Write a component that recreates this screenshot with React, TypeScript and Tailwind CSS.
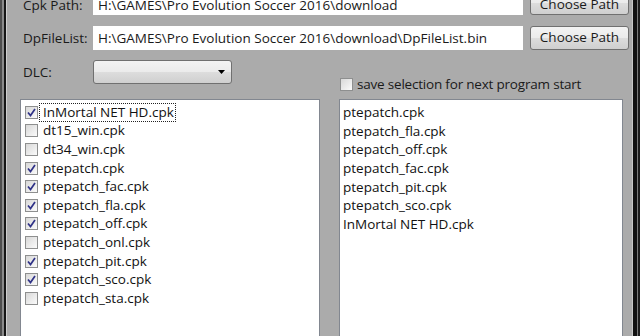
import React from "react";

const leftItems = [
  { name: "InMortal NET HD.cpk", checked: true, focus: true },
  { name: "dt15_win.cpk", checked: false },
  { name: "dt34_win.cpk", checked: false },
  { name: "ptepatch.cpk", checked: true },
  { name: "ptepatch_fac.cpk", checked: true },
  { name: "ptepatch_fla.cpk", checked: true },
  { name: "ptepatch_off.cpk", checked: true },
  { name: "ptepatch_onl.cpk", checked: false },
  { name: "ptepatch_pit.cpk", checked: true },
  { name: "ptepatch_sco.cpk", checked: true },
  { name: "ptepatch_sta.cpk", checked: false },
];

const rightItems = [
  "ptepatch.cpk",
  "ptepatch_fla.cpk",
  "ptepatch_off.cpk",
  "ptepatch_fac.cpk",
  "ptepatch_pit.cpk",
  "ptepatch_sco.cpk",
  "InMortal NET HD.cpk",
];

const font = "font-['Segoe_UI','Open_Sans',sans-serif]";

const CheckBox = ({ checked }: { checked: boolean }) => (
  <div className="w-[13px] h-[13px] shrink-0 border border-[#8e8f8f] bg-gradient-to-br from-[#d8d8d8] to-[#fbfbfb] flex items-center justify-center">
    {checked && (
      <svg width="9" height="9" viewBox="0 0 9 9">
        <path d="M1 4.5 L3.5 7.5 L8 1" fill="none" stroke="#2f3287" strokeWidth="1.7" />
      </svg>
    )}
  </div>
);

const Button = ({ label, low }: { label: string; low?: boolean }) => (
  <button
    className={`w-[99px] h-[24px] shrink-0 rounded-[3px] border border-[#707070] bg-[linear-gradient(#f3f3f3_0%,#ebebeb_50%,#dddddd_50%,#cfcfcf_100%)] text-[13.5px] text-[#1a1a1a] leading-none ${
      low ? "pt-[4px]" : ""
    }`}
  >
    {label}
  </button>
);

const TextBox = ({ value, low }: { value: string; low?: boolean }) => (
  <div
    className={`w-[430px] h-[24px] bg-white flex items-center pl-[5px] text-[13.5px] text-[#1a1a1a] whitespace-nowrap overflow-hidden ${
      low ? "pt-[4px]" : ""
    }`}
  >
    {value}
  </div>
);

export default function App() {
  return (
    <div className={`w-[640px] h-[336px] overflow-hidden bg-[#ababab] flex ${font}`}>
      {/* left window frame */}
      <div className="flex shrink-0 h-full">
        <div className="w-[2px] bg-[#4d4d4d]" />
        <div className="w-[2px] bg-[#8a8a8a]" />
        <div className="w-[2px] bg-[#151515]" />
        <div className="w-[1px] bg-[#cfcfcf]" />
      </div>

      <div className="w-[625px] flex flex-col -mt-[9px]">
        <div className="flex items-center h-[24px]">
          <div className="w-[86px] pl-[16px] pt-[5px] text-[13.5px] text-[#1a1a1a]">Cpk Path:</div>
          <TextBox value="H:\GAMES\Pro Evolution Soccer 2016\download" low />
          <div className="w-[7px]" />
          <Button label="Choose Path" low />
        </div>
        <div className="flex items-center h-[24px] mt-[11px]">
          <div className="w-[86px] pl-[16px] text-[13.5px] text-[#1a1a1a]">DpFileList:</div>
          <TextBox value="H:\GAMES\Pro Evolution Soccer 2016\download\DpFileList.bin" />
          <div className="w-[7px]" />
          <Button label="Choose Path" />
        </div>

        <div className="flex flex-1 mt-[10px] pl-[13px]">
          <div className="w-[300px] flex flex-col">
            <div className="flex items-center h-[24px]">
              <div className="w-[73px] pl-[3px] text-[13.5px] text-[#1a1a1a]">DLC:</div>
              <div className="w-[139px] h-[24px] rounded-[3px] border border-[#707070] bg-[linear-gradient(#f3f3f3_0%,#ebebeb_50%,#dddddd_50%,#cfcfcf_100%)] flex items-center justify-end pr-[6px]">
                <svg width="7" height="4" viewBox="0 0 7 4">
                  <path d="M0 0 H7 L3.5 4 Z" fill="#000" />
                </svg>
              </div>
            </div>
            <div className="mt-[15px] flex-1 -mb-[6px] bg-white border border-[#828790] pt-[3px] pl-[4px]">
              {leftItems.map((it) => (
                <div key={it.name} className="flex items-center h-[18.6px]">
                  <CheckBox checked={it.checked} />
                  <div
                    className={`ml-[1px] pl-[3px] pr-[1px] text-[13.5px] leading-[17px] text-[#111] border border-dotted ${
                      it.focus ? "border-[#222]" : "border-transparent"
                    }`}
                  >
                    {it.name}
                  </div>
                </div>
              ))}
            </div>
          </div>

          <div className="w-[19px]" />

          <div className="w-[284px] flex flex-col">
            <div className="flex items-center h-[12px] mt-[18px] pl-[1px]">
              <CheckBox checked={false} />
              <span className="ml-[4px] text-[13.5px] tracking-[-0.2px] text-[#1a1a1a] whitespace-nowrap">
                save selection for next program start
              </span>
            </div>
            <div className="mt-[9px] flex-1 -mb-[6px] bg-white border border-[#828790] pt-[3px] pl-[3px]">
              {rightItems.map((n) => (
                <div key={n} className="h-[18.6px] flex items-center text-[13.5px] text-[#111]">
                  {n}
                </div>
              ))}
            </div>
          </div>
        </div>
      </div>

      {/* right window frame */}
      <div className="flex shrink-0 h-full">
        <div className="w-[1px] bg-[#c8c8c8]" />
        <div className="w-[4px] bg-[#111]" />
        <div className="w-[1px] bg-[#7a7a7a]" />
        <div className="w-[2px] bg-[#1c1c1c]" />
      </div>
    </div>
  );
}
